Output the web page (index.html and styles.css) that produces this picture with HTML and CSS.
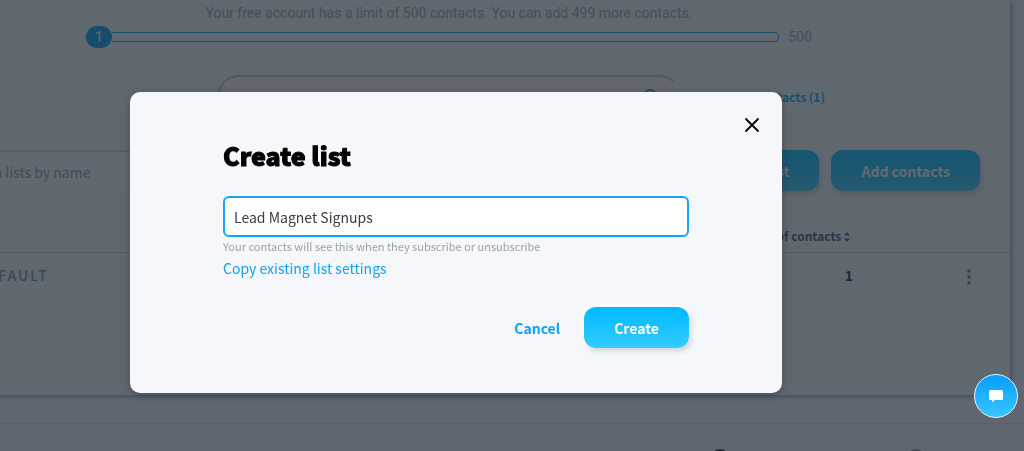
FILE: index.html
```html
<!DOCTYPE html>
<html lang="en">
<head>
    <meta charset="UTF-8">
    <meta name="viewport" content="width=device-width, initial-scale=1.0">
    <title>Contacts - Create list</title>
    <link rel="stylesheet" href="styles.css">
</head>
<body>
    <div class="page">
        <main class="panel">
            <p class="limit-text">Your free account has a limit of 500 contacts. You can add 499 more contacts.</p>
            <div class="limit">
                <span class="limit-count">1</span>
                <span class="limit-bar"></span>
                <span class="limit-max">500</span>
            </div>

            <div class="search-row">
                <div class="search-box">
                    <input class="search-input" type="text" aria-label="Search contacts">
                    <svg class="search-icon" width="16" height="16" viewBox="0 0 16 16" fill="none" stroke="currentColor" stroke-width="2">
                        <circle cx="7" cy="7" r="6"/>
                        <path d="M11 11l4 4"/>
                    </svg>
                </div>
                <a class="all-contacts" href="#">Show all contacts (1)</a>
            </div>

            <div class="toolbar">
                <input class="list-search" type="text" placeholder="Search in lists by name" aria-label="Search in lists by name">
                <div class="toolbar-buttons">
                    <button class="btn" type="button">Create list</button>
                    <button class="btn" type="button">Add contacts</button>
                </div>
            </div>

            <table class="lists">
                <thead>
                    <tr>
                        <th class="col-name"></th>
                        <th class="col-count">Number of contacts
                            <svg width="6" height="10" viewBox="0 0 6 10" fill="currentColor">
                                <path d="M3 0l3 3.500H0zM3 10L0 6.500h6z"/>
                            </svg>
                        </th>
                        <th class="col-menu"></th>
                    </tr>
                </thead>
                <tbody>
                    <tr>
                        <td class="col-name">DEFAULT</td>
                        <td class="col-count">1</td>
                        <td class="col-menu">
                            <button class="menu-btn" type="button" aria-label="List menu">
                                <svg width="4" height="16" viewBox="0 0 4 16" fill="currentColor">
                                    <circle cx="2" cy="2" r="1.700"/>
                                    <circle cx="2" cy="8" r="1.700"/>
                                    <circle cx="2" cy="14" r="1.700"/>
                                </svg>
                            </button>
                        </td>
                    </tr>
                </tbody>
            </table>
        </main>

        <footer class="footer">
            <span class="footer-dot dark"></span>
            <span class="footer-dot"></span>
        </footer>
    </div>

    <div class="overlay">
        <form class="modal" role="dialog" aria-labelledby="modal-title">
            <button class="modal-close" type="button" aria-label="Close">
                <svg width="14" height="14" viewBox="0 0 14 14" fill="none" stroke="currentColor" stroke-width="1.800" stroke-linecap="round">
                    <path d="M1 1l12 12M13 1L1 13"/>
                </svg>
            </button>
            <h1 class="modal-title" id="modal-title">Create list</h1>
            <input class="modal-input" type="text" value="Lead Magnet Signups" aria-labelledby="modal-title" aria-describedby="name-hint">
            <p class="modal-hint" id="name-hint">Your contacts will see this when they subscribe or unsubscribe</p>
            <a class="modal-link" href="#">Copy existing list settings</a>
            <div class="modal-actions">
                <button class="btn-text" type="button">Cancel</button>
                <button class="btn btn-create" type="submit">Create</button>
            </div>
        </form>
    </div>

    <button class="chat" type="button" aria-label="Open chat">
        <svg width="14" height="13" viewBox="0 0 14 13" fill="#fff">
            <path d="M1.500 0h11a1.500 1.500 0 0 1 1.500 1.500v7a1.500 1.500 0 0 1-1.500 1.500H6l-3 2.500V10H1.500A1.500 1.500 0 0 1 0 8.500v-7A1.500 1.500 0 0 1 1.500 0z"/>
        </svg>
    </button>
</body>
</html>
```

FILE: styles.css
```css
* {
    box-sizing: border-box;
}

body {
    margin: 0 0 0 -112px;
    overflow: hidden;
    background-color: #f4f5fa;
    color: #2d3142;
    font-family: "Noto Sans CJK SC", "Noto Sans", sans-serif;
    font-size: 14px;
    line-height: 20px;
}

button,
input {
    font: inherit;
}

button {
    border: none;
    background: none;
    padding: 0;
    cursor: pointer;
}

a {
    color: #0fa2f7;
    text-decoration: none;
}

.panel {
    margin-right: 14px;
    min-height: 395px;
    padding-top: 3px;
    background-color: #f5f7fa;
    box-shadow: 2px 2px 4px rgba(80, 90, 125, 0.5);
}

.limit-text {
    margin: 0;
    text-align: center;
    font-family: Roboto, sans-serif;
    font-size: 14px;
    color: #a4a8b8;
}

.limit {
    display: flex;
    align-items: center;
    max-width: 726px;
    margin: 3px auto 0;
    font-family: Roboto, sans-serif;
    color: #a4a8b8;
}

.limit-count {
    width: 26px;
    border-radius: 11px;
    background-color: #00a2ee;
    color: #fff;
    line-height: 22px;
    text-align: center;
}

.limit-bar {
    flex: 1;
    height: 10px;
    border: 1px solid #00a2ee;
    border-left: none;
    border-radius: 0 5px 5px 0;
}

.limit-max {
    margin-left: 9px;
}

.search-row {
    display: grid;
    grid-template-columns: 1fr 464px 1fr;
    align-items: center;
    column-gap: 22px;
    margin-top: 27px;
}

.search-box {
    grid-column: 2;
    display: flex;
    align-items: center;
    padding: 0 20px;
    height: 44px;
    border: 2px solid #c4c8d6;
    border-right-color: transparent;
    border-bottom-color: transparent;
    border-radius: 22px;
    background-color: #fcfcfd;
}

.search-input {
    flex: 1;
    border: none;
    background: none;
}

.search-icon {
    color: #7a8198;
}

.all-contacts {
    font-size: 12px;
    font-weight: bold;
}

.toolbar {
    display: flex;
    justify-content: space-between;
    padding: 0 30px;
    margin-top: 31px;
}

.list-search {
    width: 320px;
    padding: 0 16px 0 24px;
    border: none;
    border-top: 2px solid #d5d8e2;
    border-radius: 8px;
    background-color: #fafbfc;
}

.list-search::placeholder {
    color: #9a9fae;
}

.toolbar-buttons {
    display: flex;
    gap: 12px;
}

.btn {
    height: 41px;
    padding: 0 30px;
    border-radius: 12px;
    background-image: linear-gradient(#00b9ff, #33ccff);
    box-shadow: 2px 3px 5px rgba(110, 125, 150, 0.3);
    color: #fff;
    font-weight: bold;
}

.lists {
    width: 100%;
    margin-top: 29px;
    border-collapse: collapse;
}

.lists th {
    height: 32px;
    padding: 0;
    border-bottom: 1px solid #c9cdd8;
    color: #4d536a;
    font-size: 12px;
}

.lists td {
    height: 46px;
    padding: 0;
    font-weight: bold;
}

.lists .col-name {
    padding-left: 88px;
    text-align: left;
}

.lists td.col-name {
    color: #8c91a3;
    font-weight: 500;
    letter-spacing: 2px;
}

.lists .col-count {
    width: 200px;
    text-align: right;
}

.lists th.col-count {
    padding-right: 3px;
}

.lists .col-count svg {
    vertical-align: -1px;
}

.lists .col-menu {
    width: 157px;
    padding-right: 39px;
    text-align: right;
}

.menu-btn {
    color: #6c7288;
    vertical-align: middle;
}

.menu-btn svg {
    display: block;
}

.footer {
    display: flex;
    justify-content: flex-end;
    gap: 176px;
    margin-top: 28px;
    padding: 25px 98px 0 0;
    border-top: 1px solid #d9dce5;
}

.footer-dot {
    width: 20px;
    height: 20px;
    border-radius: 50%;
    background-color: #8288a0;
}

.footer-dot.dark {
    background-color: #1c2030;
}

.overlay {
    position: fixed;
    top: 0;
    right: 0;
    bottom: 0;
    left: -112px;
    display: flex;
    justify-content: center;
    align-items: flex-start;
    padding-top: 92px;
    background-color: rgba(32, 42, 51, 0.7);
}

.modal {
    position: relative;
    width: 652px;
    padding: 45px 93px 45px;
    border-radius: 10px;
    background-color: #f5f7fb;
    box-shadow: 0 2px 8px rgba(40, 45, 60, 0.4);
}

.modal-close {
    position: absolute;
    top: 26px;
    right: 23px;
    color: #000;
}

.modal-close svg {
    display: block;
}

.modal-title {
    margin: 0 0 23px;
    color: #000;
    font-size: 25px;
    font-weight: 900;
    line-height: 36px;
    -webkit-text-stroke: 1px #000;
}

.modal-input {
    display: block;
    width: 100%;
    height: 41px;
    padding: 0 9px;
    border: 2px solid #12a5fb;
    border-radius: 6px;
    outline: none;
    background-color: #fff;
    color: #373b47;
}

.modal-hint {
    margin: 0;
    color: #9ca1a8;
    font-size: 11px;
    line-height: 18px;
}

.modal-link {
    display: inline-block;
    margin-top: 3px;
}

.modal-actions {
    display: flex;
    justify-content: flex-end;
    align-items: center;
    gap: 24px;
    margin-top: 29px;
}

.btn-text {
    color: #0fa2f7;
    font-weight: bold;
}

.btn-create {
    box-shadow: -2px -2px 5px #fff, 2px 3px 5px rgba(110, 125, 150, 0.3);
}

.chat {
    position: fixed;
    right: 6px;
    bottom: 33px;
    display: flex;
    justify-content: center;
    align-items: center;
    width: 44px;
    height: 44px;
    border: 1px solid #e8f2fa;
    border-radius: 50%;
    background-image: linear-gradient(#0a9dff, #38c6ff);
}
```
